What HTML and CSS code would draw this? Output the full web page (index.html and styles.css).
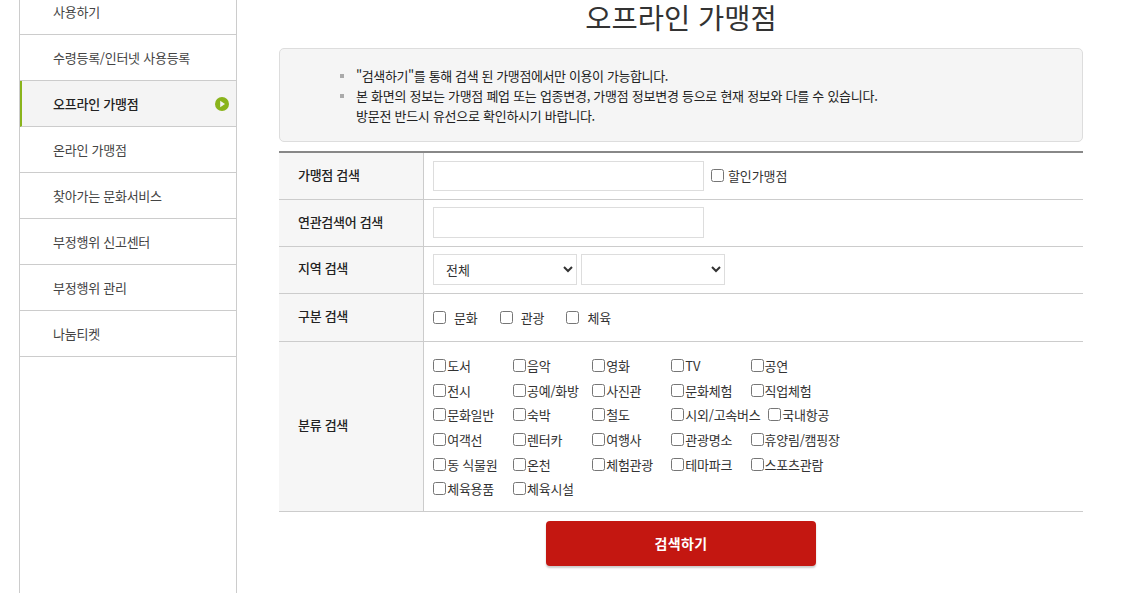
FILE: index.html
```html
<!DOCTYPE html>
<html lang="ko">
<head>
<meta charset="utf-8">
<title>오프라인 가맹점</title>
<link rel="stylesheet" href="styles.css">
</head>
<body>
<div class="page">
  <nav class="side">
    <a class="side-item first">사용하기</a>
    <a class="side-item">수령등록/인터넷 사용등록</a>
    <a class="side-item active">오프라인 가맹점
      <svg class="side-icon" viewBox="0 0 14 14" width="14" height="14"><circle cx="7" cy="7" r="7" fill="#8ab41c"/><path d="M5.2 3.8 L10 7 L5.2 10.2 Z" fill="#f4f4f4"/></svg>
    </a>
    <a class="side-item">온라인 가맹점</a>
    <a class="side-item">찾아가는 문화서비스</a>
    <a class="side-item">부정행위 신고센터</a>
    <a class="side-item">부정행위 관리</a>
    <a class="side-item">나눔티켓</a>
  </nav>
  <main class="main">
    <h1 class="title">오프라인 가맹점</h1>
    <div class="notice">
      <ul class="notice-list">
        <li>"검색하기"를 통해 검색 된 가맹점에서만 이용이 가능합니다.</li>
        <li>본 화면의 정보는 가맹점 폐업 또는 업종변경, 가맹점 정보변경 등으로 현재 정보와 다를 수 있습니다.<br>방문전 반드시 유선으로 확인하시기 바랍니다.</li>
      </ul>
    </div>
    <div class="form">
      <div class="row h47">
        <div class="label">가맹점 검색</div>
        <div class="field first-field">
          <input class="text" type="text">
          <label class="discount"><input type="checkbox" class="cb"> 할인가맹점</label>
        </div>
      </div>
      <div class="row h47">
        <div class="label">연관검색어 검색</div>
        <div class="field"><input class="text tall" type="text"></div>
      </div>
      <div class="row h47">
        <div class="label up">지역 검색</div>
        <div class="field selects">
          <select class="sel"><option>전체</option></select>
          <select class="sel"><option></option></select>
        </div>
      </div>
      <div class="row h48">
        <div class="label up">구분 검색</div>
        <div class="field types">
          <label class="type"><input type="checkbox" class="cb"> 문화</label>
          <label class="type"><input type="checkbox" class="cb"> 관광</label>
          <label class="type"><input type="checkbox" class="cb"> 체육</label>
        </div>
      </div>
      <div class="row">
        <div class="label up">분류 검색</div>
        <div class="field cats">
          <div class="cat-row">
            <label class="cat"><input type="checkbox" class="cb">도서</label>
            <label class="cat"><input type="checkbox" class="cb">음악</label>
            <label class="cat"><input type="checkbox" class="cb">영화</label>
            <label class="cat"><input type="checkbox" class="cb">TV</label>
            <label class="cat"><input type="checkbox" class="cb">공연</label>
          </div>
          <div class="cat-row">
            <label class="cat"><input type="checkbox" class="cb">전시</label>
            <label class="cat"><input type="checkbox" class="cb">공예/화방</label>
            <label class="cat"><input type="checkbox" class="cb">사진관</label>
            <label class="cat"><input type="checkbox" class="cb">문화체험</label>
            <label class="cat"><input type="checkbox" class="cb">직업체험</label>
          </div>
          <div class="cat-row">
            <label class="cat"><input type="checkbox" class="cb">문화일반</label>
            <label class="cat"><input type="checkbox" class="cb">숙박</label>
            <label class="cat"><input type="checkbox" class="cb">철도</label>
            <label class="cat wide"><input type="checkbox" class="cb">시외/고속버스</label>
            <label class="cat"><input type="checkbox" class="cb">국내항공</label>
          </div>
          <div class="cat-row">
            <label class="cat"><input type="checkbox" class="cb">여객선</label>
            <label class="cat"><input type="checkbox" class="cb">렌터카</label>
            <label class="cat"><input type="checkbox" class="cb">여행사</label>
            <label class="cat"><input type="checkbox" class="cb">관광명소</label>
            <label class="cat"><input type="checkbox" class="cb">휴양림/캠핑장</label>
          </div>
          <div class="cat-row">
            <label class="cat"><input type="checkbox" class="cb">동 식물원</label>
            <label class="cat"><input type="checkbox" class="cb">온천</label>
            <label class="cat"><input type="checkbox" class="cb">체험관광</label>
            <label class="cat"><input type="checkbox" class="cb">테마파크</label>
            <label class="cat"><input type="checkbox" class="cb">스포츠관람</label>
          </div>
          <div class="cat-row">
            <label class="cat"><input type="checkbox" class="cb">체육용품</label>
            <label class="cat"><input type="checkbox" class="cb">체육시설</label>
          </div>
        </div>
      </div>
    </div>
    <div class="actions"><button class="search" type="button">검색하기</button></div>
  </main>
</div>
</body>
</html>
```
FILE: styles.css
```css
* { box-sizing: border-box; }
html, body { margin: 0; height: 593px; overflow: hidden; background: #fff; }
body { font-family: "Noto Sans CJK KR", "Noto Sans", sans-serif; font-size: 13px; color: #222; }
.page { display: flex; height: 593px; padding-left: 19px; }
.side { width: 218px; border-left: 1px solid #ccc; border-right: 1px solid #ccc; flex: none; }
.side-item { display: flex; align-items: center; justify-content: space-between; height: 46px; padding: 0 7px 0 33px; border-bottom: 1px solid #ccc; color: #444; font-size: 13px; letter-spacing: -0.25px; }
.side-item.first { height: 35px; padding-bottom: 11px; }
.side-item.active { background: #f4f4f4; color: #222; font-weight: 500; border-left: 2px solid #8ab41c; padding-left: 31px; }
.side-icon { flex: none; }
.main { width: 804px; margin-left: 42px; flex: none; }
.title { margin: 0; height: 48px; text-align: center; font-size: 28.5px; font-weight: 400; line-height: 33px; color: #333; }
.notice { height: 94px; background: #f5f5f5; border: 1px solid #ddd; border-radius: 5px; padding: 17px 0 0 60px; }
.notice-list { list-style: none; margin: 0; padding: 0; font-size: 13px; line-height: 20px; color: #222; letter-spacing: -0.27px; }
.notice-list li { position: relative; padding-left: 16px; }
.notice-list li:first-child { letter-spacing: -0.39px; }
.notice-list li::before { content: ""; position: absolute; left: 0; top: 8px; width: 4px; height: 4px; background: #aaa; }
.form { margin-top: 9px; border-top: 2px solid #888; }
.row { display: flex; border-bottom: 1px solid #ccc; }
.h47 { height: 47px; }
.h48 { height: 48px; }
.label { width: 145px; flex: none; display: flex; align-items: center; padding: 0 0 3px 19px; background: #f6f6f6; border-right: 1px solid #ccc; font-weight: 500; font-size: 13px; color: #222; letter-spacing: -0.3px; }
.label.up { padding-bottom: 5px; }
.field { flex: 1; display: flex; align-items: center; padding-left: 9px; font-size: 13px; color: #333; letter-spacing: -0.1px; }
.first-field { padding-bottom: 1px; }
.text { width: 271px; height: 30px; border: 1px solid #ddd; background: #fff; margin: 0; }
.text.tall { height: 31px; margin-bottom: 1px; }
.cb { width: 13px; height: 13px; margin: 0; flex: none; }
.discount { display: flex; align-items: center; gap: 4px; margin-left: 7px; }
.selects { gap: 4px; padding-bottom: 1px; }
.sel { width: 144px; height: 31px; border: 1px solid #ddd; background: #fff; padding-left: 8px; font: inherit; font-size: 13px; color: #333; margin: 0; }
.types { gap: 22px; }
.type { display: flex; align-items: center; gap: 8px; }
.cats { flex-direction: column; align-items: flex-start; padding: 11px 0 10px 9.2px; letter-spacing: -0.25px; }
.cat-row { display: flex; height: 24.7px; align-items: center; }
.cat { display: flex; align-items: center; gap: 1px; width: 79.2px; white-space: nowrap; }
.cat:first-child { width: 79.8px; }
.cat.wide { width: 97px; }
.actions { display: flex; justify-content: center; padding-top: 9px; }
.search { width: 270px; height: 45px; border: 0; border-radius: 4px; background: #c41711; color: #fff; font: inherit; font-size: 14px; font-weight: 700; letter-spacing: 0.4px; padding-bottom: 2px; box-shadow: 0 2px 2px #ccc; }
```
